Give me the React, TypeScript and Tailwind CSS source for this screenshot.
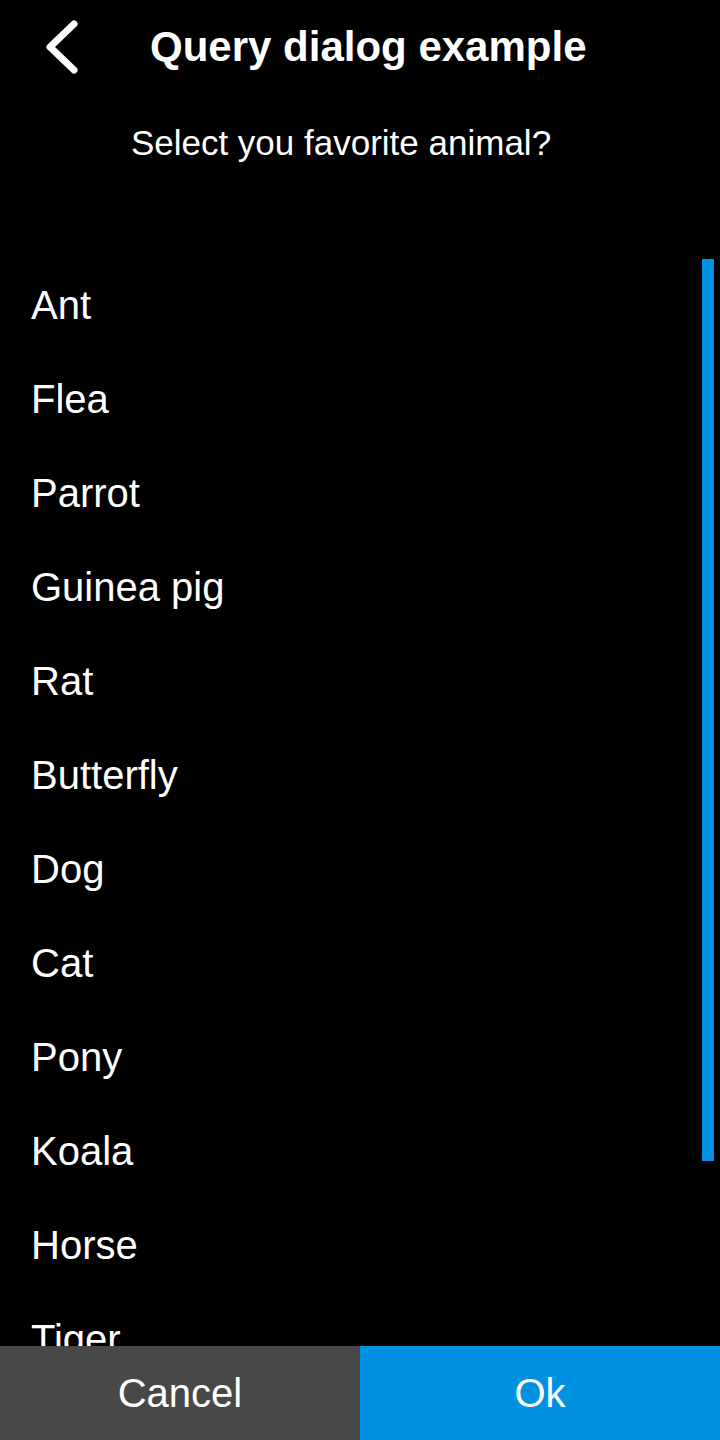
import React from 'react';

const animals = ['Ant', 'Flea', 'Parrot', 'Guinea pig', 'Rat', 'Butterfly', 'Dog', 'Cat', 'Pony', 'Koala', 'Horse', 'Tiger', 'Lion'];

export default function App() {
  return (
    <div className="w-[720px] h-[1440px] bg-black text-white flex flex-col overflow-hidden" style={{ fontFamily: '"Liberation Sans", Arial, sans-serif' }}>
      {/* Header */}
      <div className="h-[94px] flex items-center shrink-0">
        <button className="w-[120px] h-full flex items-center pl-[42px]">
          <svg width="38" height="56" viewBox="0 0 38 56" fill="none">
            <path d="M32 5 L8 28 L32 51" stroke="white" strokeWidth="7" strokeLinecap="round" strokeLinejoin="round" />
          </svg>
        </button>
        <h1 className="text-[42px] font-bold pl-[30px] leading-none">Query dialog example</h1>
      </div>

      {/* Question */}
      <div className="h-[96px] flex items-start justify-center pr-[38px] pt-[31px] shrink-0">
        <p className="text-[35px] leading-none">Select you favorite animal?</p>
      </div>

      <div className="h-[68px] shrink-0" />

      {/* List */}
      <div className="relative flex-1 overflow-hidden">
        <ul>
          {animals.map((a) => (
            <li key={a} className="h-[94px] flex items-center pl-[31px] text-[40px] leading-none">
              {a}
            </li>
          ))}
        </ul>
        <div className="absolute right-[6px] top-[1px] w-[12px] h-[902px] bg-[#0091e3]" />
      </div>

      {/* Buttons */}
      <div className="h-[94px] flex shrink-0">
        <button className="flex-1 bg-[#484848] text-[40px] text-white flex items-center justify-center">Cancel</button>
        <button className="flex-1 bg-[#0091e3] text-[40px] text-white flex items-center justify-center">Ok</button>
      </div>
    </div>
  );
}
